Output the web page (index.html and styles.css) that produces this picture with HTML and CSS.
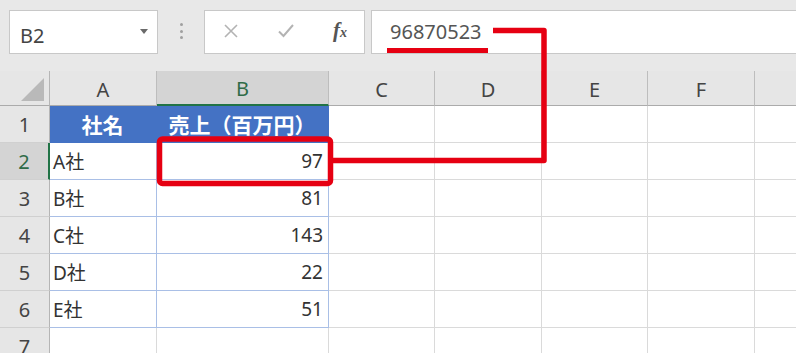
FILE: index.html
```html
<!DOCTYPE html>
<html lang="ja">
<head>
    <meta charset="UTF-8">
    <meta name="viewport" content="width=device-width, initial-scale=1.0">
    <title>Excel - セルの値</title>
    <link rel="stylesheet" href="styles.css">
</head>
<body>
    <div class="sheet">
        <div class="toolbar">
            <div class="name-box">
                <span class="cell-ref">B2</span>
                <span class="caret"></span>
            </div>
            <div class="grip"><i></i><i></i><i></i></div>
            <div class="fx-box">
                <svg class="icon" width="14" height="14" viewBox="0 0 14 14">
                    <path d="M1 1 L13 13 M13 1 L1 13" stroke="#b3b3b3" stroke-width="1.6" fill="none"/>
                </svg>
                <svg class="icon" width="16" height="14" viewBox="0 0 16 14">
                    <path d="M1 7.5 L5.5 12 L15 1" stroke="#b3b3b3" stroke-width="2" fill="none"/>
                </svg>
                <span class="fx"><b>f</b><small>x</small></span>
            </div>
            <div class="formula">96870523</div>
        </div>

        <div class="grid">
            <!-- column headers -->
            <div class="corner"><span class="select-all"></span></div>
            <div class="ch">A</div>
            <div class="ch sel-col">B</div>
            <div class="ch">C</div>
            <div class="ch">D</div>
            <div class="ch">E</div>
            <div class="ch">F</div>
            <div class="ch last"></div>

            <!-- row 1 -->
            <div class="rh">1</div>
            <div class="c th">社名</div>
            <div class="c th">売上（百万円）</div>
            <div class="c"></div><div class="c"></div><div class="c"></div><div class="c"></div><div class="c last"></div>

            <!-- row 2 -->
            <div class="rh sel-row">2</div>
            <div class="c td">A社</div>
            <div class="c td num">97</div>
            <div class="c"></div><div class="c"></div><div class="c"></div><div class="c"></div><div class="c last"></div>

            <!-- row 3 -->
            <div class="rh">3</div>
            <div class="c td">B社</div>
            <div class="c td num">81</div>
            <div class="c"></div><div class="c"></div><div class="c"></div><div class="c"></div><div class="c last"></div>

            <!-- row 4 -->
            <div class="rh">4</div>
            <div class="c td">C社</div>
            <div class="c td num">143</div>
            <div class="c"></div><div class="c"></div><div class="c"></div><div class="c"></div><div class="c last"></div>

            <!-- row 5 -->
            <div class="rh">5</div>
            <div class="c td">D社</div>
            <div class="c td num">22</div>
            <div class="c"></div><div class="c"></div><div class="c"></div><div class="c"></div><div class="c last"></div>

            <!-- row 6 -->
            <div class="rh">6</div>
            <div class="c td">E社</div>
            <div class="c td num">51</div>
            <div class="c"></div><div class="c"></div><div class="c"></div><div class="c"></div><div class="c last"></div>

            <!-- row 7 -->
            <div class="rh">7</div>
            <div class="c"></div><div class="c"></div><div class="c"></div><div class="c"></div><div class="c"></div><div class="c"></div><div class="c last"></div>
        </div>

        <!-- red annotation drawn over the sheet -->
        <svg class="marks" width="796" height="353" viewBox="0 0 796 353">
            <rect x="387" y="48" width="101" height="5" fill="#e60012"/>
            <polyline points="493,30.5 544,30.5 544,160.5 331,160.5" stroke="#e60012" stroke-width="5.5" fill="none" stroke-linejoin="round"/>
            <rect x="159.5" y="139" width="171" height="44.5" rx="3" stroke="#e60012" stroke-width="5.5" fill="none"/>
        </svg>
    </div>
</body>
</html>
```

FILE: styles.css
```css
body {
    margin: 0;
    background-color: white;
    font-family: "Noto Sans", "Noto Sans CJK JP", sans-serif;
}

.sheet {
    position: relative;
    width: 796px;
    height: 353px;
    overflow: hidden;
    background-color: #e8e8e8;
}

/* formula bar */
.toolbar {
    display: flex;
    height: 44px;
    padding: 10px 0 0 9px;
    margin-bottom: 17px;
}

.name-box {
    box-sizing: border-box;
    width: 149px;
    display: flex;
    align-items: center;
    justify-content: space-between;
    padding: 0 9px 0 10px;
    background-color: white;
    border: 1px solid #c8c8c8;
    color: #444;
    font-size: 20px;
}

.cell-ref {
    padding-top: 6px;
}

.caret {
    width: 0;
    height: 0;
    border-left: 4px solid transparent;
    border-right: 4px solid transparent;
    border-top: 5px solid #6a6a6a;
    margin-top: -2px;
}

.grip {
    width: 46px;
    display: flex;
    flex-direction: column;
    align-items: center;
    justify-content: center;
    gap: 3.5px;
    padding-bottom: 2px;
    box-sizing: border-box;
}

.grip i {
    width: 3px;
    height: 3px;
    border-radius: 50%;
    background-color: #a0a0a0;
}

.fx-box {
    box-sizing: border-box;
    width: 161px;
    display: flex;
    align-items: center;
    justify-content: space-between;
    padding: 0 17px 0 19px;
    background-color: white;
    border: 1px solid #c8c8c8;
}

.icon {
    display: block;
    margin-top: -2px;
}

.fx {
    font-family: "Liberation Serif", serif;
    font-style: italic;
    color: #555;
    margin-top: -4px;
}

.fx b {
    font-size: 21px;
    font-weight: bold;
}

.fx small {
    font-size: 14px;
    font-weight: bold;
}

.formula {
    box-sizing: border-box;
    flex: 1;
    margin-left: 6px;
    display: flex;
    align-items: center;
    padding: 0 0 1px 18px;
    background-color: white;
    border: 1px solid #c8c8c8;
    border-right: none;
    color: #555;
    font-size: 20px;
}

/* cells */
.grid {
    display: grid;
    grid-template-columns: 50px 107px 172px 106px 107px 106px 107px 41px;
    grid-template-rows: 35px repeat(7, 37px);
}

.grid > div {
    box-sizing: border-box;
    display: flex;
    align-items: center;
    min-width: 0;
    white-space: nowrap;
}

.corner {
    position: relative;
    background-color: #e6e6e6;
    border-right: 1px solid #b5b5b5;
    border-bottom: 1px solid #ababab;
}

.select-all {
    position: absolute;
    right: 5px;
    bottom: 4px;
    width: 0;
    height: 0;
    border-left: 23px solid transparent;
    border-bottom: 23px solid #b9b9b9;
}

.ch {
    justify-content: center;
    background-color: #e6e6e6;
    border-right: 1px solid #bdbdbd;
    border-bottom: 1px solid #ababab;
    color: #444;
    font-size: 20px;
    padding-top: 2px;
}

.ch.last {
    border-right: none;
}

.sel-col {
    background-color: #d4d4d4;
    border-bottom: 2px solid #217346;
    color: #2f6b47;
}

.rh {
    justify-content: center;
    background-color: #e6e6e6;
    border-right: 1px solid #b5b5b5;
    border-bottom: 1px solid #d0d0d0;
    color: #444;
    font-size: 20px;
}

.sel-row {
    background-color: #d4d4d4;
    border-right: 2px solid #217346;
    color: #2f6b47;
}

.c {
    background-color: white;
    border-right: 1px solid #dadada;
    border-bottom: 1px solid #dadada;
    padding: 0 4px 0 3px;
    color: #333;
    font-size: 19px;
}

.c.last {
    border-right: none;
}

.th {
    justify-content: center;
    background-color: #4472c4;
    border-right-color: #4472c4;
    border-bottom-color: #4472c4;
    color: white;
    font-weight: bold;
    font-size: 21px;
}

.td {
    border-right-color: #a9bfe6;
    border-bottom-color: #a9bfe6;
}

.num {
    justify-content: flex-end;
    padding-right: 5px;
}

.marks {
    position: absolute;
    top: 0;
    left: 0;
    pointer-events: none;
}
```
